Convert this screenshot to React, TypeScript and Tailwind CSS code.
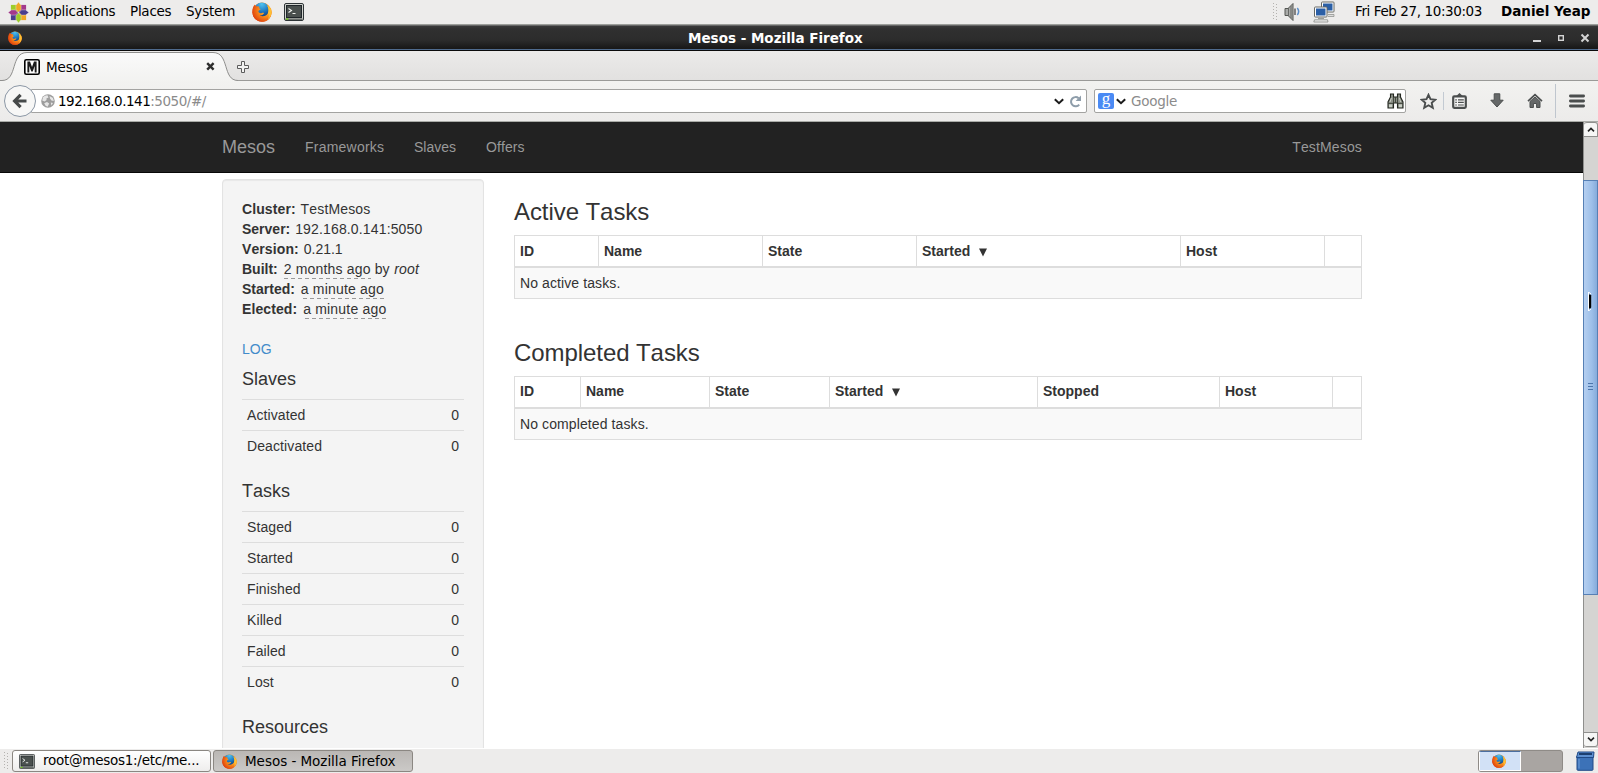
import React from "react";

const UI = "font-['DejaVu_Sans',sans-serif] text-[13.5px] leading-[16px] whitespace-pre";

function Firefox({ size }: { size: number }) {
  return (
    <svg width={size} height={size} viewBox="0 0 20 20" className="shrink-0">
      <defs>
        <radialGradient id="fxo" cx="0.7" cy="0.35" r="0.9">
          <stop offset="0" stopColor="#ffd23c" />
          <stop offset="0.4" stopColor="#f98a1b" />
          <stop offset="0.8" stopColor="#e0440e" />
          <stop offset="1" stopColor="#b92a08" />
        </radialGradient>
        <radialGradient id="fxb" cx="0.5" cy="0.1" r="0.9">
          <stop offset="0" stopColor="#4fc3f0" />
          <stop offset="0.55" stopColor="#1f78c0" />
          <stop offset="1" stopColor="#12336f" />
        </radialGradient>
      </defs>
      <circle cx="10" cy="10.2" r="9.6" fill="url(#fxo)" />
      <circle cx="9.8" cy="8.2" r="7.6" fill="url(#fxb)" />
      <path d="M1 5.5 C1.6 3.6 2.6 2.8 2.8 2.4 C3 3.5 3.5 4 4.6 4.2 C6 4 7 4.3 7.6 5 C6.7 5.7 7 6.6 8.6 7 C8.4 8 6.6 8.2 6.4 9.3 C6.4 10.6 8 11.6 9.8 11 C11 10.6 11.8 10.8 12 11.2 C11.3 12.6 9.6 13.6 7.6 13.2 C10 15 14.4 14.4 16 11 C17 8.6 16.4 5 15 3.2 C18 4.6 19.8 8 19.6 11 C19 16.4 15 19.8 10 19.8 C4.6 19.8 .4 15.6 .4 10.2 C.4 8.2 .6 6.8 1 5.5Z" fill="url(#fxo)" />
      <path d="M16 11 C17 8.6 16.4 5 15 3.2 C18 4.6 19.8 8 19.6 11 C19 14 17.5 16.6 15.6 17.8 C17.2 15.6 17 13 16 11Z" fill="#ffc738" opacity="0.8" />
    </svg>
  );
}

function Terminal({ w, h }: { w: number; h: number }) {
  return (
    <svg width={w} height={h} viewBox="0 0 20 18" preserveAspectRatio="none" className="shrink-0">
      <rect x="0.5" y="0.5" width="19" height="17" rx="1.5" fill="#d0d2cd" stroke="#2e3436" />
      <rect x="2.5" y="2.5" width="15" height="12" fill="#4a504e" stroke="#20262a" />
      <rect x="1.5" y="15.4" width="17" height="1.6" fill="#6a6f6c" />
      <rect x="2" y="15.4" width="2.4" height="1.3" fill="#73d216" />
      <path d="M4.5 5.5 L7.5 7.5 L4.5 9.5 M8.5 10.5 H11.5" fill="none" stroke="#f2f4f0" strokeWidth="1.1" />
    </svg>
  );
}

function Distro() {
  return (
    <svg width="21" height="21" viewBox="-10.5 -10.5 21 21" className="shrink-0">
      <rect x="-7.6" y="-7.6" width="7.4" height="7.4" fill="#9ccd2a" />
      <rect x="0.2" y="-7.6" width="7.4" height="7.4" fill="#a3398b" />
      <rect x="-7.6" y="0.2" width="7.4" height="7.4" fill="#4a3f8f" />
      <rect x="0.2" y="0.2" width="7.4" height="7.4" fill="#efa724" />
      <path d="M0 -10.4 L2.6 -7 V-3 L0 -0.6 L-2.6 -3 V-7Z" fill="#efa724" stroke="#edeceb" strokeWidth="0.4" />
      <path d="M10.4 0 L7 2.6 H3 L0.6 0 L3 -2.6 H7Z" fill="#4a3f8f" stroke="#edeceb" strokeWidth="0.4" />
      <path d="M0 10.4 L-2.6 7 V3 L0 0.6 L2.6 3 V7Z" fill="#9ccd2a" stroke="#edeceb" strokeWidth="0.4" />
      <path d="M-10.4 0 L-7 -2.6 H-3 L-0.6 0 L-3 2.6 H-7Z" fill="#a3398b" stroke="#edeceb" strokeWidth="0.4" />
    </svg>
  );
}

function Grip() {
  return (
    <svg width="5" height="18" viewBox="0 0 5 18" className="shrink-0">
      {[0, 3, 6, 9, 12, 15].map((y) => (
        <g key={y} fill="#b4b2af">
          <rect x="0" y={y} width="1" height="1" />
          <rect x="3" y={y + 1} width="1" height="1" />
        </g>
      ))}
    </svg>
  );
}

function TopPanel() {
  return (
    <header className={`flex h-[25px] items-center border-b border-[#9c9e9a] bg-[#edeceb] text-black ${UI}`}>
      <div className="ml-2 flex w-7 items-center"><Distro /></div>
      <span className="mb-0.5 w-[94px] tracking-[-0.26px]">Applications</span>
      <span className="mb-0.5 w-14 tracking-[-0.26px]">Places</span>
      <span className="mb-0.5 w-[66px] tracking-[-0.2px]">System</span>
      <Firefox size={20} />
      <div className="ml-3 flex flex-1"><Terminal w={20} h={18} /></div>
      <Grip />
      <svg width="17" height="20" viewBox="0 0 17 20" className="ml-1.5">
        <path d="M1 6.5 H4 L9 1.5 V18.5 L4 13.5 H1Z" fill="#a9aaa8" stroke="#555753" />
        <path d="M4.5 6 V14 M7 4 V16" stroke="#666865" />
        <path d="M11 6.5 V13" stroke="#555" strokeWidth="1.4" />
        <path d="M13.3 6 Q16 9.5 13.3 13" fill="none" stroke="#5d8fc9" strokeWidth="1.5" />
      </svg>
      <svg width="22" height="22" viewBox="0 0 22 22" className="ml-3">
        <rect x="8.5" y="1" width="12.5" height="10" rx="0.8" fill="#fff" stroke="#666864" />
        <rect x="10" y="2.5" width="9.5" height="7" fill="#2b5fa6" />
        <path d="M15 15.5 H21 V13.5 H15" fill="#ddd" stroke="#888a85" strokeWidth="0.7" />
        <rect x="1.5" y="6" width="12.5" height="10" rx="0.8" fill="#fff" stroke="#666864" />
        <rect x="3" y="7.5" width="9.5" height="7" fill="#2b5fa6" />
        <path d="M5 17.5 H11 M1.5 18.8 H14.5 L15 21 H0.8Z" fill="#eee" stroke="#888a85" strokeWidth="0.8" />
      </svg>
      <span className="mb-0.5 ml-5 w-[146px] tracking-[-0.4px]">Fri Feb 27, 10:30:03</span>
      <span className="mb-0.5 w-[97px] font-bold">Daniel Yeap</span>
    </header>
  );
}

function TitleBar() {
  return (
    <div className="flex h-[26px] items-center border-t border-t-[#666] bg-[linear-gradient(#3a3a3a_0px,#303030_3px,#2c2c2c_14px,#171717_23px,#4f6b8e_23px,#4f6b8e_24px,#0a0a0a_24px)] text-white">
      <div className="mb-0.5 ml-2 w-[680px]"><Firefox size={14} /></div>
      <span className={`mb-0.5 flex-1 font-bold ${UI}`}>Mesos - Mozilla Firefox</span>
      <svg width="60" height="12" viewBox="0 0 60 12" className="mr-[7px] mb-0.5">
        <rect x="2" y="8" width="8" height="2" fill="#d4d4d4" />
        <rect x="27.7" y="3.7" width="4.6" height="4.6" fill="none" stroke="#d4d4d4" strokeWidth="1.4" />
        <path d="M50.5 2.5 L57.5 9.5 M57.5 2.5 L50.5 9.5" stroke="#d4d4d4" strokeWidth="2" />
      </svg>
    </div>
  );
}

function TabStrip() {
  return (
    <div className="flex h-[30px] items-center border-b border-[#9a9a98] bg-[linear-gradient(#ebeae9,#e2e1e0)]">
      <div className="relative flex h-[30px] w-[237px] items-center">
        <svg width="240" height="31" viewBox="0 0 240 31" className="absolute top-0 left-0">
          <defs>
            <linearGradient id="tab" x1="0" y1="0" x2="0" y2="1">
              <stop offset="0" stopColor="#fafafa" />
              <stop offset="1" stopColor="#f2f2f0" />
            </linearGradient>
          </defs>
          <path d="M0 29.5 H2 C18 29.5 10 1.5 27 1.5 H213 C230 1.5 222 29.5 238 29.5 V31 H0Z" fill="url(#tab)" />
          <path d="M0 29.5 H2 C18 29.5 10 1.5 27 1.5 H213 C230 1.5 222 29.5 238 29.5" fill="none" stroke="#8f8f8d" />
        </svg>
        <svg width="16" height="16" viewBox="0 0 16 16" className="relative mt-0.5 ml-6">
          <rect x="0.8" y="0.8" width="14.4" height="14.4" rx="1.5" fill="#fff" stroke="#000" strokeWidth="1.6" />
          <path d="M3.4 13.4 V2.6 H6 L8 8 L10 2.6 H12.6 V13.4 H10.7 V7 L8.7 12.4 H7.3 L5.3 7 V13.4Z" fill="#1a1a1a" />
        </svg>
        <span className={`relative mt-0.5 ml-1.5 flex-1 tracking-[-0.1px] text-black ${UI}`}>Mesos</span>
        <svg width="9" height="9" viewBox="0 0 9 9" className="relative mt-0.5 mr-[22px]">
          <path d="M1.2 1.2 L7.6 7.6 M7.6 1.2 L1.2 7.6" stroke="#2e2e2e" strokeWidth="2.4" />
        </svg>
      </div>
      <svg width="12" height="12" viewBox="0 0 12 12" className="mt-0.5">
        <path d="M4.5 0.5 H7.5 V4.5 H11.5 V7.5 H7.5 V11.5 H4.5 V7.5 H0.5 V4.5 H4.5Z" fill="#f3f3f2" stroke="#5c5c5c" />
      </svg>
    </div>
  );
}

function Chevron() {
  return (
    <svg width="10" height="7" viewBox="0 0 10 7">
      <path d="M0.8 1.2 L5 5.2 L9.2 1.2" fill="none" stroke="#1a1a1a" strokeWidth="2" />
    </svg>
  );
}

function Toolbar() {
  return (
    <div className="flex h-[41px] items-center border-b border-[#a9aba7] bg-[linear-gradient(#f2f2f0,#ecebea)]">
      <div className="z-10 ml-1 -mr-[5px] flex size-8 shrink-0 items-center justify-center rounded-full border border-[#8b97a5] bg-[#f7f7f6]">
        <svg width="16" height="16" viewBox="0 0 16 16">
          <path d="M8.6 1.8 L2.6 8 L8.6 14.2 M3 8 H14.5" fill="none" stroke="#474a4a" strokeWidth="3.2" />
        </svg>
      </div>
      <div className="flex h-6 w-[1056px] items-center rounded-r-[2px] border border-[#a3a3a1] bg-white">
        <svg width="14" height="14" viewBox="0 0 14 14" className="ml-[9px]">
          <circle cx="7" cy="7" r="6.8" fill="#9d9d9d" />
          <path d="M2 3.2 Q4 1 6.5 1.2 L7.5 3.4 L5.4 4.4 L5.6 6 L3.6 7.6 L1.2 6.4Z M8.5 2 L12 4 L12.8 7 L10.4 6.4 L9 4.6Z M3.2 9.2 L6 8 L8.2 9.6 L6.6 12.8 L4.6 11.8Z M9.8 8.6 L12 9 L10.4 11.6Z" fill="#e6e6e6" />
        </svg>
        <span className={`ml-[3px] flex-1 tracking-[-0.5px] text-black ${UI}`}>192.168.0.141<span className="tracking-[-0.46px] text-[#8b8b8b]">:5050/#/</span></span>
        <Chevron />
        <svg width="13" height="13" viewBox="0 0 13 13" className="mr-1 ml-[5px]">
          <path d="M10.2 9.6 A4.6 4.6 0 1 1 9.6 3.2" fill="none" stroke="#8e9daa" strokeWidth="2" />
          <path d="M12 0.6 V6 H6.6Z" fill="#8e9daa" />
        </svg>
      </div>
      <div className="ml-[7px] flex h-6 w-[312px] items-center rounded-[2px] border border-[#a3a3a1] bg-white">
        <div className="ml-[3px] flex size-4 items-center justify-center rounded-[2px] bg-[#4a8af4] font-['Liberation_Serif',serif] text-[17px] leading-[10px] text-white"><span className="-mt-[5px]">g</span></div>
        <div className="ml-[2px]"><Chevron /></div>
        <span className={`ml-[5px] flex-1 tracking-[-0.26px] text-[#8b8b8b] ${UI}`}>Google</span>
        <svg width="17" height="16" viewBox="0 0 17 16" className="mr-[1px]">
          <path d="M3.5 1 H6.5 V4 H10.5 V1 H13.5 V4 L16 9 V15 H10.5 V10 H6.5 V15 H1 V9 L3.5 4Z" fill="#8d9188" stroke="#22261f" strokeWidth="1.1" />
          <path d="M6.5 4 V10 M10.5 4 V10 M1 10.4 H6.5 M10.5 10.4 H16 M8.5 4 V10" stroke="#3a3f37" strokeWidth="0.9" />
          <path d="M4.4 5 L3 9 M12.4 5 L13.6 9" stroke="#c9cdc4" />
          <rect x="2" y="11.4" width="3" height="2.8" fill="#c9d0c6" />
          <rect x="12" y="11.4" width="3" height="2.8" fill="#c9d0c6" />
        </svg>
      </div>
      <svg width="17" height="17" viewBox="0 0 17 17" className="ml-[14px]">
        <path d="M8.5 1.8 L10.5 6.2 L15.3 6.7 L11.7 9.9 L12.8 14.8 L8.5 12.3 L4.2 14.8 L5.3 9.9 L1.7 6.7 L6.5 6.2Z" fill="none" stroke="#4b4e4e" strokeWidth="1.9" />
      </svg>
      <div className="ml-[6px] h-[18px] w-px bg-[#c3cad2]" />
      <svg width="15" height="16" viewBox="0 0 15 16" className="ml-[8px]">
        <rect x="1.2" y="3.4" width="12.6" height="11.4" rx="1" fill="#f6f6f5" stroke="#4b4e4e" strokeWidth="2.2" />
        <path d="M3.2 4 L7.5 0 L11.8 4Z" fill="#4b4e4e" />
        <path d="M3.3 6.8 H4.8 M6 6.8 H11.8 M3.3 9.4 H4.8 M6 9.4 H11.8 M3.3 12 H4.8 M6 12 H11.8" stroke="#4b4e4e" strokeWidth="1.2" />
      </svg>
      <svg width="14" height="16" viewBox="0 0 14 16" className="ml-[23px]">
        <path d="M4.2 0.8 H9.8 V7.2 H13.2 L7 14 L0.8 7.2 H4.2Z" fill="#656868" stroke="#4b4e4e" />
      </svg>
      <svg width="16" height="16" viewBox="0 0 16 16" className="ml-[23px]">
        <path d="M3 8.4 L8 4 L13 8.4 V14.5 H9.6 V10.5 H6.4 V14.5 H3Z" fill="#656868" stroke="#4b4e4e" />
        <path d="M1 8.2 L8 1.6 L15 8.2" fill="none" stroke="#4b4e4e" strokeWidth="1.6" />
      </svg>
      <div className="ml-3 h-[34px] w-px bg-[#bfc6ce]" />
      <svg width="16" height="14" viewBox="0 0 16 14" className="mb-px ml-[13px]">
        <path d="M1.4 2 H14.6 M1.4 7 H14.6 M1.4 12 H14.6" stroke="#4b4e4e" strokeWidth="2.8" strokeLinecap="round" />
      </svg>
    </div>
  );
}

function MesosNav() {
  return (
    <nav className="flex h-[51px] items-center border-b border-[#080808] bg-[#222] pr-[221px] pl-[222px] text-[#999]">
      <span className="w-[83px] text-[18px]">Mesos</span>
      <span className="w-[109px] tracking-[0.22px]">Frameworks</span>
      <span className="w-[72px]">Slaves</span>
      <span className="flex-1 tracking-[0.1px]">Offers</span>
      <span className="tracking-[0.15px]">TestMesos</span>
    </nav>
  );
}

function StatTable({ title, rows }: { title: string; rows: string[] }) {
  return (
    <section className="mb-5">
      <h4 className="mb-[10px] h-5 text-[18px] leading-5">{title}</h4>
      {rows.map((r) => (
        <div key={r} className="flex h-[31px] justify-between border-t border-[#ddd] px-[5px] pt-[5px]">
          <span className="tracking-[0.1px]">{r}</span>
          <span>0</span>
        </div>
      ))}
    </section>
  );
}

function Ago({ children, shift }: { children: string; shift?: boolean }) {
  return (
    <span className="relative ml-[2px] tracking-[0.19px]">
      {children}
      <svg width="100%" height="1" className={shift ? "absolute top-[17px] left-[2px]" : "absolute top-[17px] left-0"}>
        <line x1="0" y1="0.5" x2="100%" y2="0.5" stroke="#999" strokeDasharray="4 3" />
      </svg>
    </span>
  );
}

function Sidebar() {
  return (
    <aside className="h-[640px] w-[262px] shrink-0 rounded-t-[4px] border border-[#e3e3e3] bg-[#f4f4f4] p-[19px] shadow-[inset_0_1px_1px_rgba(0,0,0,0.05)]">
      <div className="h-5"><b className="tracking-[0.1px]">Cluster:</b>{" "}<span className="ml-px tracking-[0.15px]">TestMesos</span></div>
      <div className="h-5"><b>Server:</b>{" "}<span className="ml-px tracking-[0.15px]">192.168.0.141:5050</span></div>
      <div className="h-5"><b className="tracking-[0.1px]">Version:</b>{" "}<span className="ml-px">0.21.1</span></div>
      <div className="h-5"><b>Built:</b>{" "}<Ago>2 months ago</Ago> by <i className="ml-px tracking-[0.1px]">root</i></div>
      <div className="h-5"><b>Started:</b>{" "}<Ago shift>a minute ago</Ago></div>
      <div className="h-5"><b className="tracking-[0.1px]">Elected:</b>{" "}<Ago shift>a minute ago</Ago></div>
      <div className="mt-5 mb-[10px] h-5 text-[#428bca]">LOG</div>
      <StatTable title="Slaves" rows={["Activated", "Deactivated"]} />
      <StatTable title="Tasks" rows={["Staged", "Started", "Finished", "Killed", "Failed", "Lost"]} />
      <StatTable title="Resources" rows={[]} />
    </aside>
  );
}

type TaskTableProps = {
  title: string;
  cols: { label: string; w: string }[];
  empty: string;
  headPad: string;
};

function TaskTable({ title, cols, empty, headPad }: TaskTableProps) {
  return (
    <section className="mb-[41px] w-[848px]">
      <h3 className="mb-[10px] h-[26px] text-[24px] leading-[26px] tracking-[-0.07px]">{title}</h3>
      <div className="border border-[#ddd]">
        <div className="flex h-[32px] border-b-2 border-[#ddd] font-bold">
          {cols.map((c, i) => (
            <div key={i} className={`${c.w} ${headPad} shrink-0 border-r border-[#ddd] pl-[5px] last:border-r-0`}>
              {c.label}
              {c.label === "Started" && (
                <svg width="8" height="9" viewBox="0 0 8 9" className="ml-[9px] inline-block align-[-1px]">
                  <path d="M0 0.5 H8 L4 8.5Z" fill="#333" />
                </svg>
              )}
            </div>
          ))}
        </div>
        <div className="h-[30px] bg-[#f9f9f9] pt-[5px] pl-[5px] tracking-[0.1px]">{empty}</div>
      </div>
    </section>
  );
}

function Scrollbar() {
  return (
    <div className="flex w-[15px] shrink-0 flex-col border-l border-[#8f8f8d] bg-[#d5d4d2]">
      <div className="flex h-[15px] items-center justify-center rounded-t-[3px] border border-l-0 border-[#8f8f8d] bg-[#f6f6f5]">
        <svg width="8" height="5" viewBox="0 0 8 5"><path d="M1 4.4 L4 1.4 L7 4.4" fill="none" stroke="#222" strokeWidth="1.6" /></svg>
      </div>
      <div className="relative mt-[43px] -ml-px flex h-[415px] flex-col items-center border border-[#5780b5] bg-[linear-gradient(90deg,#b5cff0,#9dbfe9_60%,#86abdb)]">
        <svg width="5" height="7" viewBox="0 0 5 7" className="mt-[202px]">
          <path d="M0 0.5 H5 M0 3.5 H5 M0 6.5 H5" stroke="#4d76ac" />
        </svg>
        <svg width="6" height="19" viewBox="0 0 6 19" className="absolute top-[111px] left-1">
          <path d="M0 0.5 H1.5 L3 2 M0.5 0.5 V18.5 M0 18.5 H1.5 L3 17" fill="none" stroke="#fff" />
          <path d="M1 2.5 H2.2 L3.2 3.5 V15.5 L2.2 16.5 H1Z" fill="#000" />
        </svg>
      </div>
      <div className="mt-auto mb-px flex h-[15px] items-center justify-center rounded-b-[3px] border border-l-0 border-[#8f8f8d] bg-[#f6f6f5]">
        <svg width="8" height="5" viewBox="0 0 8 5"><path d="M1 0.6 L4 3.6 L7 0.6" fill="none" stroke="#222" strokeWidth="1.6" /></svg>
      </div>
    </div>
  );
}

function BottomPanel() {
  return (
    <footer className={`flex h-[25px] items-center border-t border-white bg-[#edeceb] text-black ${UI}`}>
      <div className="ml-1 w-2"><Grip /></div>
      <div className="flex h-[22px] w-[199px] items-center rounded-[3px] border border-[#8b8782] bg-[linear-gradient(#fff,#eeedec)] pl-1.5">
        <Terminal w={16} h={15} />
        <span className="mb-0.5 ml-2 tracking-[-0.26px]">root@mesos1:/etc/me...</span>
      </div>
      <div className="ml-0.5 flex h-[22px] w-[200px] items-center rounded-[3px] border border-[#8b8782] bg-[linear-gradient(#bab7b4,#cbc9c7)] pl-2">
        <Firefox size={15} />
        <span className="ml-2 tracking-[-0.03px]">Mesos - Mozilla Firefox</span>
      </div>
      <div className="mr-3 ml-auto flex h-[22px] w-[85px] overflow-hidden rounded-[3px] border border-[#8f8b87] bg-[#a9a5a2]">
        <div className="flex w-[42px] items-center justify-center border border-t-[#4b6e9f] border-r-white border-b-white border-l-white bg-[#d2e1f6] pr-0.5">
          <Firefox size={14} />
        </div>
      </div>
      <svg width="20" height="20" viewBox="0 0 20 20" className="mr-[3px]">
        <path d="M2 5 H18 V18.5 Q18 19.3 17 19.3 H3 Q2 19.3 2 18.5Z" fill="#3c72b8" stroke="#204a87" />
        <path d="M3 1 H19 L18.5 6.5 H1.5Z" fill="#5c8fd0" stroke="#204a87" />
        <path d="M4 3 H17" stroke="#1c3f70" strokeWidth="2" />
        <path d="M4 8 V17.5" stroke="#6f9edb" />
      </svg>
    </footer>
  );
}

export default function App() {
  return (
    <div className="flex h-[773px] w-[1598px] flex-col overflow-hidden bg-white">
      <TopPanel />
      <TitleBar />
      <TabStrip />
      <Toolbar />
      <div className="flex h-[626px]">
        <div className="flex-1 overflow-hidden bg-white font-['Liberation_Sans',Arial,sans-serif] text-[14px] leading-5 text-[#333] [font-kerning:none]">
          <MesosNav />
          <div className="flex gap-[30px] pt-1.5 pl-[222px]">
            <Sidebar />
            <main className="pt-5">
              <TaskTable
                title="Active Tasks"
                empty="No active tasks."
                headPad="pt-[5px]"
                cols={[
                  { label: "ID", w: "w-[84px]" },
                  { label: "Name", w: "w-[164px]" },
                  { label: "State", w: "w-[154px]" },
                  { label: "Started", w: "w-[264px]" },
                  { label: "Host", w: "w-[144px]" },
                  { label: "", w: "w-[36px]" },
                ]}
              />
              <TaskTable
                title="Completed Tasks"
                empty="No completed tasks."
                headPad="pt-1"
                cols={[
                  { label: "ID", w: "w-[66px]" },
                  { label: "Name", w: "w-[129px]" },
                  { label: "State", w: "w-[120px]" },
                  { label: "Started", w: "w-[208px]" },
                  { label: "Stopped", w: "w-[182px]" },
                  { label: "Host", w: "w-[113px]" },
                  { label: "", w: "w-[28px]" },
                ]}
              />
            </main>
          </div>
        </div>
        <Scrollbar />
      </div>
      <BottomPanel />
    </div>
  );
}
